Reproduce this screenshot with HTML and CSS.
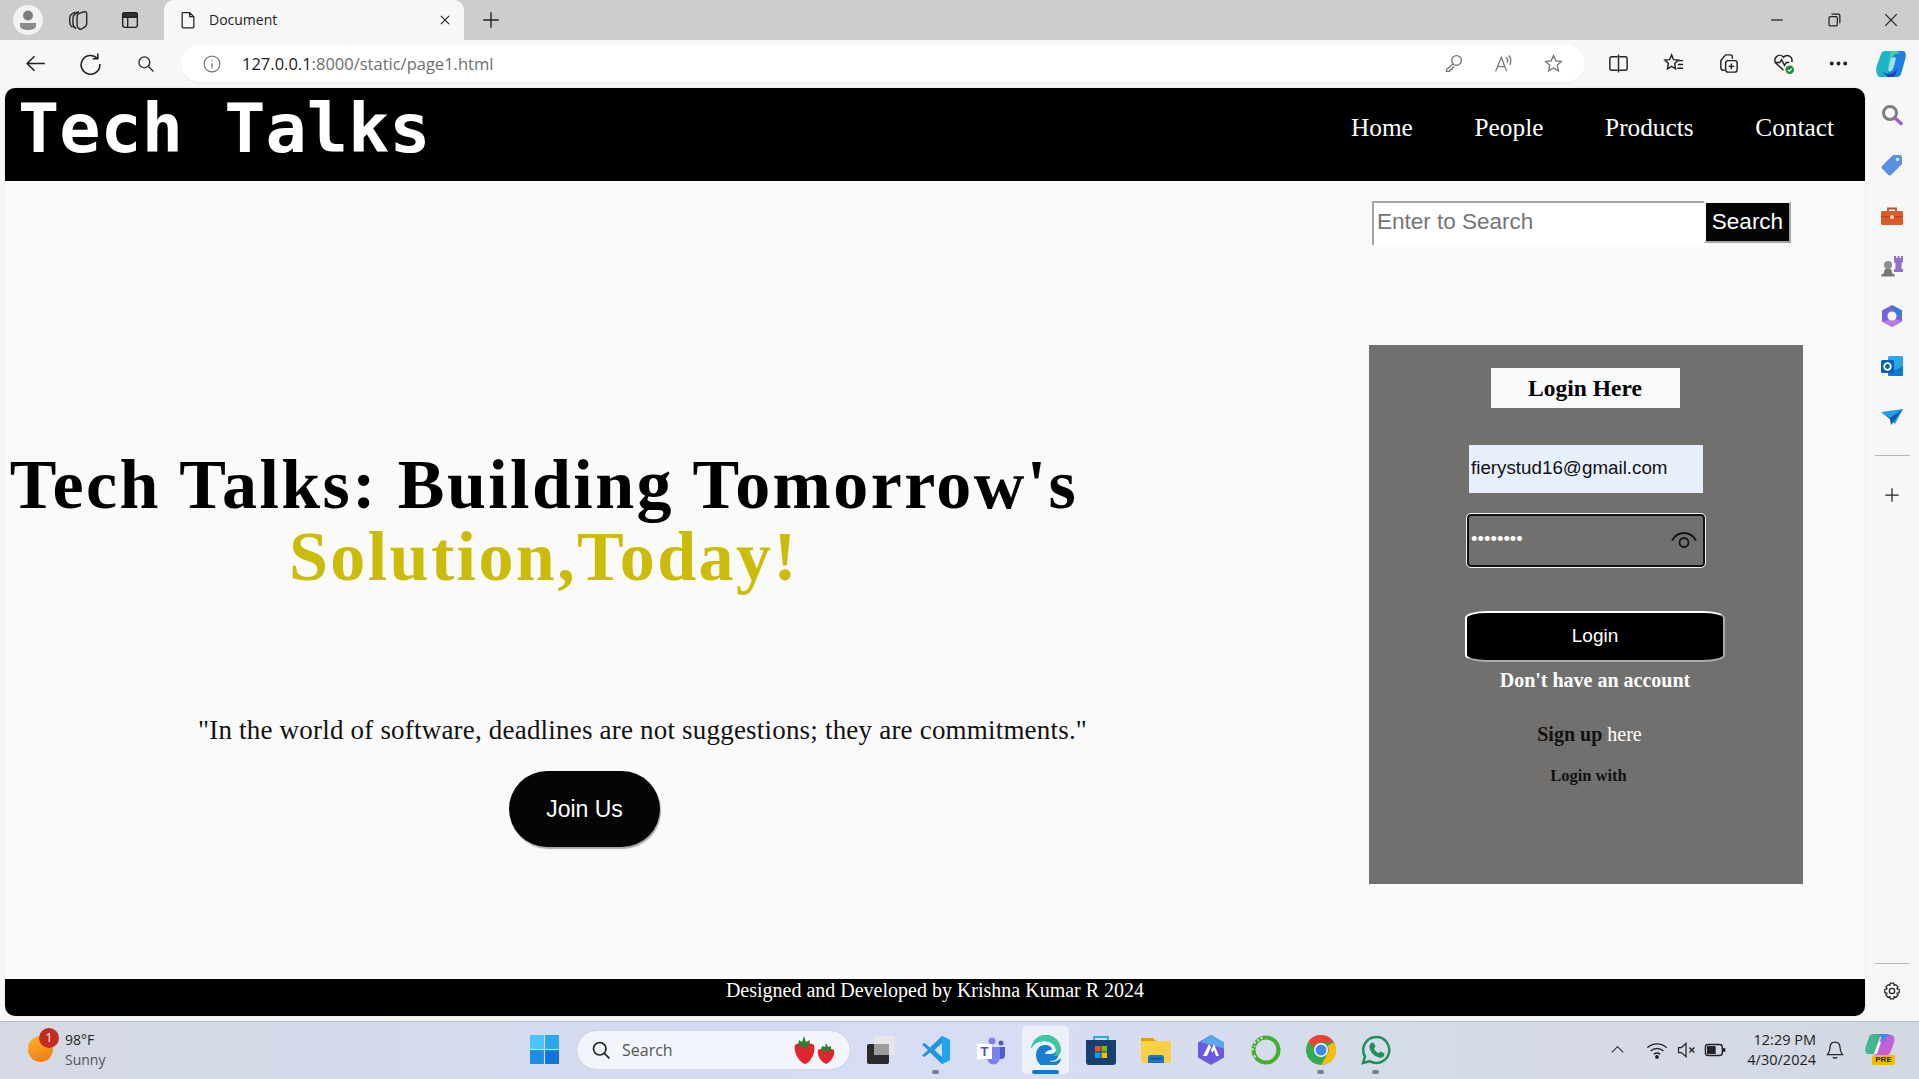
FILE: index.html
```html
<!DOCTYPE html>
<html lang="en">
<head>
    <meta charset="UTF-8">
    <title>Document</title>
    <link rel="stylesheet" href="styles.css">
</head>
<body>
    <!-- browser tab strip -->
    <div class="tabstrip">
        <div class="profile">
            <svg width="30" height="30" viewBox="0 0 30 30"><circle cx="15" cy="10.5" r="5" fill="#7c7c7c"/><path d="M7 18h16v2.5c0 3-3.5 4.500-8 4.500s-8-1.500-8-4.500z" fill="#8a8a8a"/></svg>
        </div>
        <div class="strip-btn">
            <svg class="ico" viewBox="0 0 24 24"><path d="M9 3.500C5 5 3 7 3 10v5c0 2 1 3.500 3 5M13 3C9 4.500 6.500 6.500 6.500 10v6c0 2 1 4 3.500 5.500M11 8c0-2 1.500-3 3-3.500L19 3c1.500-.5 2.500.5 2.500 2v11c0 1.500-.5 2.500-2 3.500l-3 2c-1.500 1-3 .5-4-.5-.5-.5-1.500-2-1.500-3.500z"/></svg>
        </div>
        <div class="strip-btn">
            <svg class="ico" viewBox="0 0 24 24"><rect x="4" y="4" width="16" height="16" rx="2.5"/><path d="M9.500 9v11"/><path d="M4 6.500A2.500 2.500 0 0 1 6.500 4h11A2.500 2.500 0 0 1 20 6.500V9H4z" fill="#333"/></svg>
        </div>
        <div class="tab">
            <svg class="ico" viewBox="0 0 24 24"><path d="M6 3h8l5 5v12.500a1 1 0 0 1-1 1H6a1 1 0 0 1-1-1V4a1 1 0 0 1 1-1zM14 3v5h5"/></svg>
            <span class="tab-title">Document</span>
            <svg class="ico tab-close" viewBox="0 0 24 24"><path d="M6.500 6.500l11 11M17.500 6.500l-11 11"/></svg>
        </div>
        <div class="strip-btn new-tab">
            <svg class="ico" viewBox="0 0 24 24"><path d="M12 3.500v17M3.500 12h17"/></svg>
        </div>
        <div class="window-btns">
            <svg class="ico" viewBox="0 0 24 24"><path d="M5 12h14"/></svg>
            <svg class="ico" viewBox="0 0 24 24"><rect x="6" y="8" width="10" height="11" rx="1.500"/><path d="M9 5h8.500a1.500 1.500 0 0 1 1.500 1.500V16"/></svg>
            <svg class="ico" viewBox="0 0 24 24"><path d="M5 5l14 14M19 5L5 19"/></svg>
        </div>
    </div>

    <!-- address bar row -->
    <div class="toolbar">
        <div class="tool-btn"><svg class="ico big" viewBox="0 0 24 24"><path d="M21 12H4M11 5l-7 7 7 7"/></svg></div>
        <div class="tool-btn"><svg class="ico big" viewBox="0 0 24 24"><path d="M18.500 7a9 9 0 1 0 2.500 5.500M19 2.500V7.500h-5"/></svg></div>
        <div class="tool-btn"><svg class="ico" viewBox="0 0 24 24"><circle cx="10" cy="10" r="6.500"/><path d="M15 15l6 6"/></svg></div>
        <div class="address">
            <svg class="ico grey info" viewBox="0 0 24 24"><circle cx="12" cy="12" r="9.500"/><path d="M12 11v6M12 7v1.500"/></svg>
            <span class="url"><span class="url-host">127.0.0.1</span>:8000/static/page1.html</span>
            <div class="address-icons">
                <svg class="ico grey" viewBox="0 0 24 24"><circle cx="15.500" cy="8.500" r="5.500"/><path d="M11.500 12.500L4 19v2h3.500l1-2 2-.5.500-2 2-1"/></svg>
                <svg class="ico grey" viewBox="0 0 24 24"><path d="M3 21L9.500 5l6 16M5.500 15.500h8M15 5c2 1.500 2 4.500 1 6.500M18 3c3 2.500 3 7.500 1 10.500"/></svg>
                <svg class="ico grey star" viewBox="0 0 24 24"><path d="M12 3l2.700 6 6.300.7-4.700 4.300 1.300 6.500L12 17.200 6.400 20.500 7.700 14 3 9.700 9.300 9z"/></svg>
            </div>
        </div>
        <div class="tool-right">
            <div class="tool-btn"><svg class="ico" viewBox="0 0 24 24"><path d="M11 5H5a2 2 0 0 0-2 2v10a2 2 0 0 0 2 2h6M13 5h6a2 2 0 0 1 2 2v10a2 2 0 0 1-2 2h-6M12 2.500v19"/></svg></div>
            <div class="tool-btn"><svg class="ico" viewBox="0 0 24 24"><path d="M10 3l2 5 5 .5-3.800 3.500 1 5.500L10 15l-4.300 2.500 1-5.500L3 8.500 8 8zM16 9h6M16.500 13H22M16 17h6" /></svg></div>
            <div class="tool-btn"><svg class="ico" viewBox="0 0 24 24"><path d="M8 19H6.500A2.500 2.500 0 0 1 4 16.500V9l5-6h5a2 2 0 0 1 2 2v2"/><rect x="9" y="9" width="12" height="12" rx="2.500"/><path d="M15 12v6M12 15h6"/></svg></div>
            <div class="tool-btn"><svg class="ico" viewBox="0 0 24 24"><path d="M12 19L4 11.500A5 5 0 0 1 12 5.500a5 5 0 0 1 8.500 5M2.500 11H8l2-3 3 6 2-3h3"/><circle cx="18.500" cy="18.500" r="4.500" fill="#1f8a3a" stroke="none"/><path d="M16.500 18.500l1.500 1.500 2.500-2.500" stroke="#fff" stroke-width="1.200"/></svg></div>
            <div class="tool-btn"><svg class="ico" viewBox="0 0 24 24"><circle cx="5" cy="12" r="1.300" fill="#222"/><circle cx="12" cy="12" r="1.300" fill="#222"/><circle cx="19" cy="12" r="1.300" fill="#222"/></svg></div>
        </div>
        <div class="tool-copilot">
            <svg width="30" height="28" viewBox="0 0 30 28"><path d="M9 1h10l-7 26H3C0 24-.5 20 1 15L5 4c.7-2 2-3 4-3z" fill="#1db5c4"/><path d="M21 27H11l7-26h9c3 0 3.500 4 2 9l-4 14c-.7 2-2 3-4 3z" fill="#1a80e4"/><path d="M6 22l6 5h5c2-1 3-3 3.500-6l1-4c-2 5-4 7-8 7-3 0-5-1-7.500-2z" fill="#1e3fc0"/><path d="M14 1h6c2 0 3 1 3.500 3-3-1-6 0-7 4l-2 8-3 4c1-7 3-15 2.500-19z" fill="#3fd0a8"/><path d="M15 9l-3 11 2 2c2-1 3-3 4-6l2-8c-2-1-4-1-5 1z" fill="#9fe0f5"/></svg>
        </div>
    </div>

    <div class="viewport">
        <div class="page">
            <header class="site-header">
                <div class="logo">Tech Talks</div>
                <nav class="nav">
                    <a>Home</a>
                    <a>People</a>
                    <a>Products</a>
                    <a>Contact</a>
                </nav>
            </header>

            <main class="content">
                <section class="hero">
                    <h1 class="headline">Tech Talks: Building Tomorrow's<br><span class="headline-accent">Solution,Today!</span></h1>
                    <p class="quote">"In the world of software, deadlines are not suggestions; they are commitments."</p>
                    <div class="join-row"><button class="join-btn">Join Us</button></div>
                </section>

                <aside class="side">
                    <form class="search-form">
                        <input class="search-input" type="text" placeholder="Enter to Search">
                        <button class="search-btn" type="button">Search</button>
                    </form>

                    <div class="login-panel">
                        <div class="login-title">Login Here</div>
                        <div class="login-email">fierystud16@gmail.com</div>
                        <div class="login-pass">
                            <span class="pass-dots">••••••••</span>
                            <svg class="eye" viewBox="0 0 26 18"><path d="M1 9.500C4 4 8 2 13 2s9 2 12 7.500"/><circle cx="13" cy="11.500" r="4.500"/></svg>
                        </div>
                        <button class="login-btn" type="button">Login</button>
                        <div class="no-account">Don't have an account</div>
                        <div class="signup">Sign up <a>here</a></div>
                        <div class="login-with">Login with</div>
                    </div>
                </aside>
            </main>

            <footer class="site-footer">Designed and Developed by Krishna Kumar R 2024</footer>
        </div>

        <!-- edge sidebar -->
        <div class="sidebar">
            <svg class="side-ico" viewBox="0 0 24 24"><circle cx="10" cy="10" r="6.500" fill="none" stroke="#7d7d7d" stroke-width="3"/><path d="M15 15l6 5.500" stroke="#9a62c9" stroke-width="3.500" stroke-linecap="round"/></svg>
            <svg class="side-ico" viewBox="0 0 24 24"><path d="M13 2h7a2 2 0 0 1 2 2v7L11 22a2 2 0 0 1-2.500 0L2 15.500A2 2 0 0 1 2 13z" fill="#5b8fe3"/><circle cx="17.500" cy="6.500" r="1.800" fill="#dbe7fb"/></svg>
            <svg class="side-ico" viewBox="0 0 24 24"><path d="M8 7V4.500h8V7" fill="none" stroke="#b0532b" stroke-width="1.800"/><rect x="1" y="7" width="22" height="14" rx="1.500" fill="#dc5a26"/><rect x="1" y="12" width="22" height="1.200" fill="#b5441b"/><circle cx="12" cy="13" r="2" fill="#d9d9d9"/></svg>
            <svg class="side-ico" viewBox="0 0 24 24"><circle cx="8" cy="11" r="4" fill="#8d8d8d"/><path d="M5 15h6l1.500 5h-9zM1.500 20h13v2.500h-13z" fill="#777"/><path d="M14 2h2v2h1.500V2h2v2H21V2h2v6l-1.500 1v6H23v3h-9v-3h1.500V9L14 8z" fill="#9072c8"/></svg>
            <svg class="side-ico" viewBox="0 0 24 24"><path d="M12 1l10 5.500v11L12 23 2 17.500v-11z" fill="#7a62d6"/><path d="M12 1l10 5.500v6l-7-3z" fill="#2f7fd8"/><path d="M2 17.500L12 23l10-5.500-7-3z" fill="#b07fe0"/><circle cx="12" cy="12" r="4.500" fill="#f7f7f7"/></svg>
            <svg class="side-ico" viewBox="0 0 24 24"><rect x="8" y="2" width="15" height="20" rx="1.500" fill="#28a8ea"/><path d="M8 12l7.500 4 7.500-4v9a1 1 0 0 1-1 1H9a1 1 0 0 1-1-1z" fill="#0f78d4"/><rect x="1" y="6" width="13" height="13" rx="1.500" fill="#0a5fb4"/><circle cx="7.500" cy="12.500" r="3.300" fill="none" stroke="#fff" stroke-width="1.800"/></svg>
            <svg class="side-ico" viewBox="0 0 24 24"><path d="M1 7l22-3-8 15-5-5z" fill="#1f9fe8"/><path d="M1 7l9 7 1 6 4-5 8-11-13 9z" fill="#0b5cad"/></svg>
            <div class="side-line"></div>
            <svg class="ico side-plus" viewBox="0 0 24 24"><path d="M12 4v16M4 12h16"/></svg>
            <div class="side-bottom">
                <div class="side-line"></div>
                <svg class="ico" viewBox="0 0 24 24"><circle cx="12" cy="12" r="3.200"/><path d="M10 2.500h4l.6 2.800 2-.9 2.700 2.900-1.400 2 2.800 1v3.500l-2.800 1 1.400 2-2.700 2.900-2-1-.6 2.800h-4l-.6-2.800-2 1-2.700-2.900 1.400-2-2.800-1v-3.500l2.800-1-1.400-2 2.700-2.900 2 .9z"/></svg>
            </div>
        </div>
    </div>

    <!-- windows taskbar -->
    <div class="taskbar">
        <div class="weather">
            <div class="weather-icon"><span class="weather-badge">1</span></div>
            <div class="weather-text">
                <div class="weather-temp">98°F</div>
                <div class="weather-desc">Sunny</div>
            </div>
        </div>

        <div class="task-center">
            <svg class="win-logo" viewBox="0 0 30 30"><rect width="14.400" height="14.400" fill="#4cc2ff"/><rect x="15.600" width="14.400" height="14.400" fill="#2aa5ee"/><rect y="15.600" width="14.400" height="14.400" fill="#1a8fe3"/><rect x="15.600" y="15.600" width="14.400" height="14.400" fill="#0a78d8"/></svg>
            <div class="task-search">
                <svg class="ico search-glass" viewBox="0 0 24 24"><circle cx="10.500" cy="10.500" r="7.500"/><path d="M16 16l6 6"/></svg>
                <span class="task-search-text">Search</span>
                <svg class="berries" viewBox="0 0 42 28"><path d="M1 9c4-3 15-3 19 0 2 7-3 17-9 19C5 26-1 16 1 9z" fill="#e0262c"/><path d="M24 14c3-2 13-2 16 0 1.500 5-3 12-8 14-5-2-9.500-9-8-14z" fill="#e0262c"/><path d="M4 9l1-5 3 2 2-6 2 6 4-2-1 6-5 2z" fill="#2e7d32"/><path d="M27 14l1-4 3 1 1-4 2 4 3-1v5l-5 1z" fill="#2e7d32"/></svg>
            </div>
            <div class="task-apps">
                <div class="app">
                    <svg class="app-ico" viewBox="0 0 30 30"><rect x="1" y="9" width="22" height="20" rx="2" fill="#2a2a2a"/><rect x="8" y="1" width="21" height="19" rx="2" fill="#e8e8e8" fill-opacity=".85"/><rect x="8" y="9" width="15" height="11" fill="#9c9c9c"/></svg>
                </div>
                <div class="app running">
                    <svg class="app-ico" viewBox="0 0 30 30"><path d="M21 1l8 4v20l-8 4L9 17.500 3.500 22 1 20.500 7 15 1 9.500 3.500 8 9 12.500z" fill="#2196e0"/><path d="M21 8l-7.500 7 7.500 7z" fill="#d6dcec"/><path d="M21 1l8 4v20l-8 4z" fill="#1fa4f0"/></svg>
                </div>
                <div class="app">
                    <svg class="app-ico" viewBox="0 0 30 30"><circle cx="16" cy="6" r="3.500" fill="#7b83eb"/><circle cx="25" cy="8" r="2.500" fill="#5059c9"/><path d="M21 12h8v8a4 4 0 0 1-8 0z" fill="#5059c9"/><path d="M11 12h13v11a6 6 0 0 1-13 0z" fill="#7b83eb"/><rect x="1" y="9" width="15" height="15" fill="#fff"/><text class="teams-t" x="8.500" y="21">T</text></svg>
                </div>
                <div class="app active">
                    <svg class="app-ico" viewBox="0 0 30 30"><path d="M15 0C7 0 1 6 0 14c2-5 7-8 13-8 7 0 12 4 12 9 0 3-3 4-6 4h-5c1-3 3-4 7-4 0-3-3-5-7-5-6 0-9 5-9 10 0 8 7 15 17 12 5-2 8-5 8-9-3 3-8 5-12 3 8 0 10-3 10-11C28 6 23 0 15 0z" fill="#1b7fd0"/><path d="M15 0c7 0 15 5 15 15 0 4-3 6-8 6 3-1 3-3 3-6 0-5-5-9-12-9-6 0-11 3-13 8C1 6 7 0 15 0z" fill="#3cc8a0"/></svg>
                </div>
                <div class="app">
                    <svg class="app-ico" viewBox="0 0 30 30"><path d="M8 6V2h14v4" fill="none" stroke="#2aa8e0" stroke-width="1.800"/><path d="M0 5h30v22a3 3 0 0 1-3 3H3a3 3 0 0 1-3-3z" fill="#17406f"/><rect x="9" y="11" width="5.500" height="5.500" fill="#f25022"/><rect x="15.500" y="11" width="5.500" height="5.500" fill="#7fba00"/><rect x="9" y="17.500" width="5.500" height="5.500" fill="#00a4ef"/><rect x="15.500" y="17.500" width="5.500" height="5.500" fill="#ffb900"/></svg>
                </div>
                <div class="app">
                    <svg class="app-ico" viewBox="0 0 30 30"><path d="M0 3h12l3 3h15v6H0z" fill="#e0a100"/><path d="M0 6h30v22H0z" fill="#fbcf47"/><path d="M7 28v-6a2 2 0 0 1 2-2h12a2 2 0 0 1 2 2v6z" fill="#1878c8"/><rect x="10" y="23" width="10" height="1.500" fill="#0b4f8f"/></svg>
                </div>
                <div class="app">
                    <svg class="app-ico" viewBox="0 0 30 30"><path d="M15 0l13 7.500v15L15 30 2 22.500v-15z" fill="#6a5ae0"/><path d="M15 0l13 7.500v6L4 7z" fill="#5aa6ea"/><path d="M7 21l6-12 2 3-4 9zM15 15l3-6 5 12h-3l-2-6-1.500 3z" fill="#fff"/></svg>
                </div>
                <div class="app">
                    <svg class="app-ico" viewBox="0 0 30 30"><circle cx="15" cy="15" r="12.500" fill="none" stroke="#43b02a" stroke-width="4"/><path d="M3 8l9-6M1 15l3-4M3 22l3-3" stroke="#d6dcec" stroke-width="2.500" stroke-dasharray="2 2"/></svg>
                </div>
                <div class="app running">
                    <svg class="app-ico" viewBox="0 0 30 30"><circle cx="15" cy="15" r="15" fill="#34a853"/><path d="M15 0a15 15 0 0 1 13 7.500H15a7.500 7.500 0 0 0-7 4.800L2.200 7A15 15 0 0 1 15 0z" fill="#ea4335"/><path d="M28 7.500A15 15 0 0 1 15 30l6.500-11A7.500 7.500 0 0 0 21.500 11z" fill="#fbbc05"/><circle cx="15" cy="15" r="7" fill="#fff"/><circle cx="15" cy="15" r="5.500" fill="#4285f4"/></svg>
                </div>
                <div class="app running">
                    <svg class="app-ico" viewBox="0 0 30 30"><path d="M15 2a13 13 0 0 0-11 19.500L2 28l6.700-1.800A13 13 0 1 0 15 2z" fill="none" stroke="#1f8f58" stroke-width="2.500"/><path d="M10 8l2.500-.5 2 4-1.500 2c1 2 2.500 3.500 4.500 4.500l2-1.500 4 2-.5 2.500c-1 1.500-3 2-5 1.500-5-1.500-8-4.500-9.500-9.500-.5-2 .5-3.500 1.500-5z" fill="#1f8f58"/></svg>
                </div>
            </div>
        </div>

        <div class="tray">
            <svg class="ico tray-chevron" viewBox="0 0 24 24"><path d="M4 16l8-8 8 8"/></svg>
            <svg class="ico tray-wifi" viewBox="0 0 24 24"><path d="M1.500 9.500c6-5.500 15-5.500 21 0M5 13c4-3.500 10-3.500 14 0M8.500 16.500c2-1.500 5-1.500 7 0"/><circle cx="12" cy="19.500" r="1.300" fill="#222"/></svg>
            <svg class="ico tray-sound" viewBox="0 0 24 24"><path d="M3 9h3.500L12 4v16l-5.500-5H3zM16 9l6 6M22 9l-6 6"/></svg>
            <svg class="ico tray-batt" viewBox="0 0 24 24"><rect x="1.500" y="6" width="18.500" height="12" rx="3"/><rect x="4" y="8.500" width="8" height="7" fill="#222"/><path d="M22 10v4" stroke-width="2.500"/></svg>
            <div class="clock">
                <div>12:29 PM</div>
                <div>4/30/2024</div>
            </div>
            <svg class="ico tray-bell" viewBox="0 0 24 24"><path d="M12 2.500c-4 0-6 3-6 6.500 0 4-1 6-3 8.500h18c-2-2.500-3-4.500-3-8.500 0-3.500-2-6.500-6-6.500zM9.500 20.500c1 1.500 4 1.500 5 0"/></svg>
            <div class="pre-copilot">
                <svg width="30" height="22" viewBox="0 0 30 22"><path d="M8 0h8L9 20H3c-3 0-3.500-4-2-8L4 3c.7-2 2-3 4-3z" fill="#45b58f"/><path d="M22 21H10l7-20h9c3 0 4 3 3 7l-3 9c-.7 2-2 4-4 4z" fill="#c45fd8"/><path d="M12 0h10c2 0 4 1 4 1l-5 2-2 7C18 5 16 2 12 0z" fill="#3f8ce8"/><path d="M9 20l5-13 2 1-4 12z" fill="#eef2fa"/></svg>
                <span class="pre-badge">PRE</span>
            </div>
        </div>
    </div>
</body>
</html>
```

FILE: styles.css
```css
html, body {
    margin: 0;
    padding: 0;
}
body {
    width: 1919px;
    height: 1079px;
    overflow: hidden;
    display: flex;
    flex-direction: column;
    background-color: #f7f7f7;
    font-family: "Liberation Serif", serif;
}
button {
    cursor: pointer;
}

/* icons */
.ico {
    width: 20px;
    height: 20px;
    fill: none;
    stroke: #222;
    stroke-width: 1.5;
    flex: none;
}
.ico.big {
    width: 25px;
    height: 25px;
}
.ico.grey {
    stroke: #777;
}

/* tab strip */
.tabstrip {
    height: 40px;
    display: flex;
    align-items: center;
    background-color: #cdcdcd;
    padding-left: 13px;
    flex: none;
}
.profile {
    width: 30px;
    height: 30px;
    border-radius: 50%;
    background-color: #f2f2f2;
}
.strip-btn {
    width: 52px;
    display: flex;
    justify-content: center;
}
.strip-btn .ico {
    width: 22px;
    height: 22px;
}
.profile + .strip-btn {
    margin-left: 9px;
}
.tab {
    width: 300px;
    height: 40px;
    margin-left: 8px;
    box-sizing: border-box;
    padding: 0 10px 0 14px;
    background-color: #f7f7f7;
    border-radius: 10px 10px 0 0;
    display: flex;
    align-items: center;
    font-family: "Open Sans", sans-serif;
    font-size: 14px;
    color: #222;
}
.tab-title {
    margin-left: 11px;
    padding-bottom: 2px;
    flex: 1;
}
.tab-close {
    width: 18px;
    height: 18px;
}
.new-tab {
    width: 54px;
}
.window-btns {
    margin-left: auto;
    display: flex;
    gap: 37px;
    padding-right: 18px;
}

/* toolbar */
.toolbar {
    height: 48px;
    display: flex;
    align-items: center;
    padding: 0 0 1px 8px;
    box-sizing: border-box;
    flex: none;
}
.tool-btn {
    width: 55px;
    display: flex;
    justify-content: center;
}
.tool-right .ico {
    width: 23px;
    height: 23px;
}
.address {
    width: 1404px;
    height: 37px;
    margin-left: 8px;
    box-sizing: border-box;
    padding: 0 21px 0 21px;
    background-color: white;
    border-radius: 19px;
    display: flex;
    align-items: center;
    box-shadow: 0 1px 2px rgba(0, 0, 0, 0.06);
}
.info {
    width: 20px;
    height: 20px;
}
.url {
    margin-left: 20px;
    font-family: "Open Sans", sans-serif;
    font-size: 16.5px;
    color: #6f6f6f;
}
.url-host {
    color: #1a1a1a;
}
.address-icons {
    margin-left: auto;
    display: flex;
    gap: 29px;
}
.address-icons .ico {
    width: 21px;
    height: 21px;
}
.tool-right {
    display: flex;
    margin-left: 6px;
}
.tool-copilot {
    margin-left: 10px;
    display: flex;
}

/* page */
.viewport {
    height: 933px;
    display: flex;
    flex: none;
}
.page {
    width: 1860px;
    height: 928px;
    margin-left: 5px;
    background-color: #fafafa;
    border-radius: 10px;
    overflow: hidden;
    display: flex;
    flex-direction: column;
    box-shadow: 0 0 1px rgba(0, 0, 0, 0.35);
}
.site-header {
    height: 93px;
    background-color: black;
    color: white;
    display: flex;
    justify-content: space-between;
    align-items: flex-start;
    padding: 0 31px 0 13px;
    flex: none;
}
.logo {
    font-family: "DejaVu Sans Mono", monospace;
    font-size: 68.5px;
    font-weight: bold;
    line-height: 80px;
}
.nav {
    display: flex;
    gap: 61.7px;
    font-size: 25.3px;
    line-height: 30px;
    padding-top: 24px;
}
.content {
    flex: 1;
    display: flex;
}
.hero {
    flex: 1;
    padding-top: 268px;
}
.headline {
    width: 1078px;
    margin: 0;
    font-size: 70px;
    line-height: 72px;
    font-weight: bold;
    text-align: center;
    color: black;
    letter-spacing: 2.4px;
}
.headline-accent {
    color: #ccbc0a;
}
.quote {
    margin: 121px 0 0;
    padding-left: 193px;
    font-size: 27px;
    line-height: 32px;
    letter-spacing: 0.2px;
    color: #111;
}
.join-row {
    padding-left: 504px;
    margin-top: 25px;
}
.join-btn {
    width: 151px;
    height: 76px;
    border: none;
    border-radius: 38px;
    background-color: #050505;
    color: white;
    font-family: "Liberation Sans", sans-serif;
    font-size: 23px;
    box-shadow: 1px 2px 1px #aaa;
}

/* right column */
.side {
    width: 434px;
    margin-right: 62px;
    padding-top: 20px;
}
.search-form {
    display: flex;
    margin-left: 3px;
}
.search-input {
    width: 332px;
    height: 44px;
    box-sizing: border-box;
    border-width: 2px 0 0 2px;
    border-style: solid;
    border-color: #a5a5a5;
    padding: 0 3px 4px;
    background-color: white;
    font-family: "Liberation Sans", sans-serif;
    font-size: 22.5px;
    outline: none;
}
.search-input::placeholder {
    color: #757575;
}
.search-btn {
    width: 87px;
    height: 42px;
    box-sizing: border-box;
    padding: 0;
    background-color: #050505;
    color: white;
    border: 2px solid;
    border-color: #fafafa #a5a5a5 #a5a5a5 #fafafa;
    font-family: "Liberation Sans", sans-serif;
    font-size: 22.5px;
}
.login-panel {
    height: 539px;
    margin-top: 100px;
    box-sizing: border-box;
    padding-top: 23px;
    background-color: #72706e;
    display: flex;
    flex-direction: column;
    align-items: center;
}
.login-title {
    width: 189px;
    height: 40px;
    margin-right: 2px;
    background-color: #f8faf9;
    text-align: center;
    font-size: 23.5px;
    font-weight: bold;
    line-height: 40px;
    color: black;
}
.login-email {
    width: 234px;
    height: 48px;
    margin-top: 37px;
    box-sizing: border-box;
    padding-left: 2px;
    background-color: #e8f0fe;
    font-family: "Liberation Sans", sans-serif;
    font-size: 18.8px;
    line-height: 46px;
    color: #111;
}
.login-pass {
    width: 238px;
    height: 53px;
    margin-top: 21px;
    box-sizing: border-box;
    border: 2px solid #111;
    border-radius: 4px;
    outline: 1px solid #f4f4f4;
    display: flex;
    align-items: flex-start;
    justify-content: space-between;
    padding: 11px 6px 0 2px;
}
.pass-dots {
    font-family: "Liberation Sans", sans-serif;
    font-size: 18.5px;
    line-height: 24px;
    color: white;
}
.eye {
    width: 26px;
    height: 18px;
    margin-top: 4px;
    fill: none;
    stroke: #111;
    stroke-width: 1.8;
}
.login-btn {
    width: 260px;
    height: 51px;
    margin: 44px 0 0 18px;
    padding: 0 0 2px;
    background-color: black;
    color: white;
    border: 2px solid;
    border-color: white #aaa #aaa white;
    border-radius: 22px / 7px;
    font-family: "Liberation Sans", sans-serif;
    font-size: 19px;
}
.no-account {
    margin: 6px 0 0 18px;
    font-size: 20px;
    font-weight: bold;
    line-height: 24px;
    color: white;
}
.signup {
    margin: 30px 0 0 7px;
    font-size: 20px;
    line-height: 24px;
    font-weight: bold;
    color: #111;
}
.signup a {
    font-weight: normal;
    color: white;
}
.login-with {
    margin: 20px 0 0 5px;
    font-size: 16.5px;
    font-weight: bold;
    line-height: 20px;
    color: #111;
}
.site-footer {
    height: 37px;
    background-color: black;
    color: white;
    text-align: center;
    font-size: 20px;
    line-height: 23px;
    flex: none;
}

/* edge sidebar */
.sidebar {
    width: 54px;
    height: 933px;
    box-sizing: border-box;
    padding-top: 15px;
    display: flex;
    flex-direction: column;
    align-items: center;
    gap: 26.3px;
}
.side-ico {
    width: 24px;
    height: 24px;
    flex: none;
}
.side-line {
    width: 35px;
    height: 1px;
    background-color: #b5b5b5;
    flex: none;
}
.side-plus {
    margin-top: 3px;
}
.side-bottom {
    margin-top: auto;
    padding-bottom: 20px;
    display: flex;
    flex-direction: column;
    align-items: center;
    gap: 17px;
}

/* taskbar */
.taskbar {
    flex: 1;
    display: flex;
    align-items: center;
    padding-bottom: 2px;
    border-top: 1px solid #b9bdc9;
    background: linear-gradient(90deg, #d4d9e3 0%, #d6dbf0 30%, #d7ddf4 50%, #d6dbe8 75%, #d3d9e3 100%);
    font-family: "Open Sans", sans-serif;
}
.weather {
    width: 530px;
    box-sizing: border-box;
    padding-left: 28px;
    display: flex;
    gap: 12px;
    flex: none;
    font-size: 14px;
    line-height: 20px;
}
.weather-icon {
    width: 25px;
    height: 26px;
    margin-top: 6px;
    border-radius: 50%;
    background: linear-gradient(160deg, #f4b821, #f2751c);
    position: relative;
}
.weather-badge {
    position: absolute;
    top: -8px;
    left: 11px;
    width: 20px;
    height: 20px;
    border-radius: 50%;
    background-color: #c42b1c;
    color: white;
    font-size: 12px;
    line-height: 20px;
    text-align: center;
}
.weather-temp {
    color: #222;
}
.weather-desc {
    color: #555;
}
.task-center {
    display: flex;
    align-items: center;
}
.win-logo {
    width: 29px;
    height: 29px;
    flex: none;
}
.task-search {
    width: 273px;
    height: 38px;
    margin-left: 18px;
    box-sizing: border-box;
    padding: 0 14px 0 14px;
    background-color: #f3f5fc;
    border-radius: 19px;
    display: flex;
    align-items: center;
    box-shadow: 0 0 1px rgba(0, 0, 0, 0.3);
}
.search-glass {
    width: 20px;
    height: 20px;
    stroke-width: 2;
}
.task-search-text {
    margin-left: 11px;
    font-size: 16px;
    color: #555;
    flex: 1;
}
.berries {
    width: 42px;
    height: 28px;
}
.task-apps {
    display: flex;
    margin-left: 3px;
}
.app {
    width: 55px;
    height: 48px;
    box-sizing: border-box;
    display: flex;
    align-items: center;
    justify-content: center;
    position: relative;
    border-radius: 5px;
}
.app-ico {
    width: 30px;
    height: 30px;
}
.app.running::after {
    content: "";
    position: absolute;
    bottom: 0;
    left: 24px;
    width: 7px;
    height: 4px;
    border-radius: 2px;
    background-color: #7b7f88;
}
.app.active {
    background-color: #edf0f9;
    box-shadow: inset 4px 0 0 #d7ddf0, inset -4px 0 0 #d7ddf0;
}
.app.active::after {
    content: "";
    position: absolute;
    bottom: 0;
    left: 14px;
    width: 27px;
    height: 4px;
    border-radius: 2px;
    background-color: #0f78d4;
}
.teams-t {
    font-family: "Liberation Sans", sans-serif;
    font-size: 13px;
    font-weight: bold;
    text-anchor: middle;
    fill: #4b53bc;
}
.tray {
    margin-left: auto;
    display: flex;
    align-items: center;
}
.tray-chevron {
    width: 17px;
    height: 17px;
}
.tray-wifi {
    margin-left: 20px;
    width: 22px;
    height: 22px;
}
.tray-sound {
    margin-left: 8px;
    width: 20px;
    height: 20px;
}
.tray-batt {
    margin-left: 8px;
    width: 22px;
    height: 22px;
}
.clock {
    width: 88px;
    margin-left: 2px;
    font-size: 14.5px;
    line-height: 20px;
    text-align: right;
    color: #222;
}
.tray-bell {
    margin-left: 9px;
    width: 20px;
    height: 20px;
}
.pre-copilot {
    width: 30px;
    height: 31px;
    margin: 0 24px 0 20px;
    position: relative;
}
.pre-badge {
    position: absolute;
    right: 0;
    bottom: 0;
    width: 23px;
    height: 10px;
    border-radius: 2px;
    background-color: #f9b800;
    color: #222;
    font-family: "Liberation Sans", sans-serif;
    font-size: 8px;
    font-weight: bold;
    line-height: 10px;
    text-align: center;
}
```
